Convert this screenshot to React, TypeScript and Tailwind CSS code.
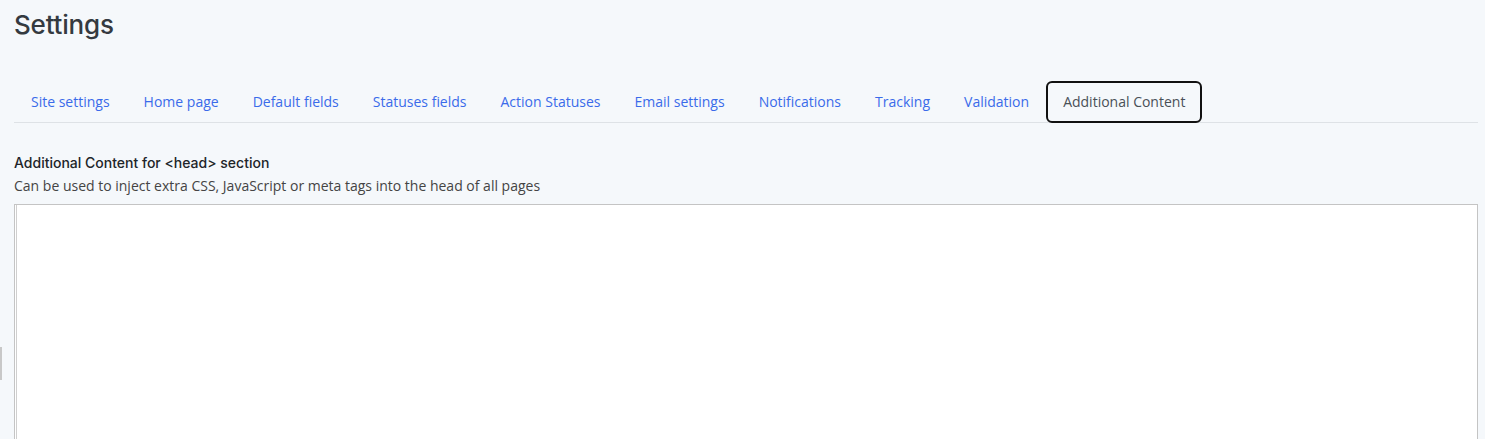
import React from "react";

const tabs = [
  "Site settings",
  "Home page",
  "Default fields",
  "Statuses fields",
  "Action Statuses",
  "Email settings",
  "Notifications",
  "Tracking",
  "Validation",
  "Additional Content",
];

const heading = { fontFamily: "Inter, 'Noto Sans', sans-serif" };
const body = { fontFamily: "'Open Sans', 'Noto Sans', sans-serif" };

export default function App() {
  const active = "Additional Content";
  return (
    <div className="relative h-[439px] overflow-hidden bg-[#f5f8fb] pl-[14px] pr-[7px]">
      {/* collapsed sidebar handle */}
      <div className="absolute left-0 top-[347px] h-[33px] w-[2px] bg-[#c8c8c8]" />

      <h1
        style={heading}
        className="pt-[9px] text-[26px] font-medium leading-[32px] tracking-[-0.2px] text-[#343a40]"
      >
        Settings
      </h1>

      <nav
        style={body}
        className="mt-[40px] flex border-b border-[#dee2e6] text-[14px] leading-[21px]"
      >
        {tabs.map((t) =>
          t === active ? (
            <div
              key={t}
              className="-mb-px rounded-[6px] border-2 border-[#111] px-[15px] py-[8px] text-[#495057]"
            >
              {t}
            </div>
          ) : (
            <a
              key={t}
              className="border border-transparent px-4 py-[9px] text-[#3a6bea]"
            >
              {t}
            </a>
          )
        )}
      </nav>

      <div className="pt-[30px]">
        <div
          style={heading}
          className="text-[14px] font-medium leading-[20px] text-[#212529]"
        >
          Additional Content for &lt;head&gt; section
        </div>
        <div style={body} className="mt-[3px] text-[14px] leading-[20px] text-[#444]">
          Can be used to inject extra CSS, JavaScript or meta tags into the head of all pages
        </div>
        <div className="mt-[8px] flex h-[260px] border border-[#c4c4c4] bg-white">
          <div className="w-px bg-white" />
          <div className="flex-1 border-l border-[#cfcfcf] bg-white" />
        </div>
      </div>
    </div>
  );
}
